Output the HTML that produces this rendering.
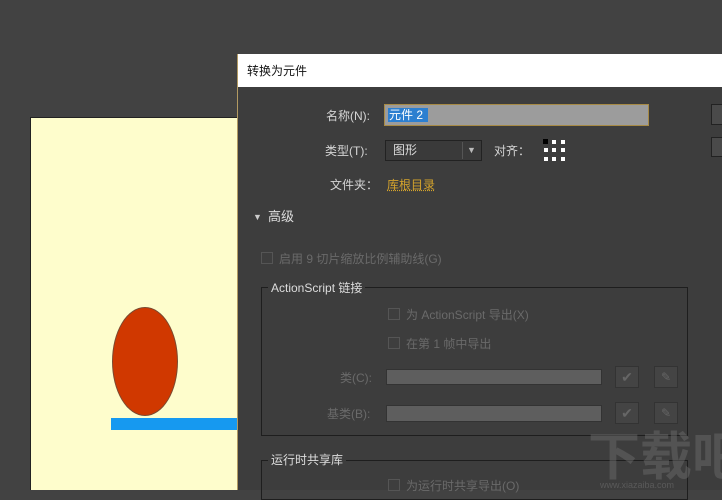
<!DOCTYPE html>
<html><head><meta charset="utf-8"><style>
*{margin:0;padding:0;box-sizing:border-box}
body{width:722px;height:490px;overflow:hidden;background:#424242;position:relative;font-family:"Liberation Sans","Noto Sans CJK SC",sans-serif;font-size:12px}
.a{position:absolute}
.t{position:absolute;white-space:nowrap;line-height:14px}
.cb{position:absolute;width:12px;height:12px;border:1px solid #555;background:#3e3e3e}
.dim{color:#6a6a6a}
.btn{position:absolute;width:24px;height:22px;border:1px solid #333;background:#444}
</style></head><body>
<div class="a" style="left:30px;top:117px;width:207px;height:373px;background:#fefdcc;border-left:1px solid #222;border-top:1px solid #222"></div>
<div class="a" style="left:112px;top:307px;width:66px;height:109px;border-radius:50%;background:#d03800;border:1px solid #7a4a30"></div>
<div class="a" style="left:111px;top:418px;width:126px;height:12px;background:#1699f0"></div>
<div class="a" style="left:237px;top:54px;width:485px;height:436px;background:#3d3d3d;border-left:1px solid #b29a62"></div>
<div class="a" style="left:238px;top:54px;width:484px;height:33px;background:#fff"></div>
<div class="t" style="left:247px;top:64px;color:#111;font-size:12px">转换为元件</div>
<div class="t" style="left:326px;top:109px;color:#d5d5d5">名称(N):</div>
<div class="a" style="left:384px;top:104px;width:265px;height:22px;background:#9c9c9c;border:1px solid #a78a45"></div>
<div class="a" style="left:388px;top:108px;width:40px;height:14px;background:#2c7fd0"></div>
<div class="t" style="left:389px;top:108px;color:#fff">元件 2</div>
<div class="a" style="left:711px;top:104px;width:12px;height:21px;border:1px solid #222;background:#4a4a4a"></div>
<div class="a" style="left:711px;top:137px;width:12px;height:20px;border:1px solid #222;background:#4a4a4a"></div>
<div class="t" style="left:325px;top:144px;color:#d5d5d5">类型(T):</div>
<div class="a" style="left:385px;top:140px;width:97px;height:21px;background:#3a3a3a;border:1px solid #222"></div>
<div class="a" style="left:462px;top:142px;width:1px;height:17px;background:#555"></div>
<div class="t" style="left:393px;top:143px;color:#ddd">图形</div>
<div class="t" style="left:467px;top:143px;color:#bbb;font-size:9px">▼</div>
<div class="t" style="left:494px;top:144px;color:#d5d5d5">对齐：</div>
<svg class="a" style="left:543px;top:139px" width="24" height="23"><g fill="#fff"><rect x="0" y="0" width="5" height="5" fill="#000"/><rect x="9" y="1" width="4" height="4"/><rect x="18" y="1" width="4" height="4"/><rect x="1" y="9" width="4" height="4"/><rect x="9" y="9" width="4" height="4"/><rect x="18" y="9" width="4" height="4"/><rect x="1" y="18" width="4" height="4"/><rect x="9" y="18" width="4" height="4"/><rect x="18" y="18" width="4" height="4"/></g></svg>
<div class="t" style="left:330px;top:178px;color:#d5d5d5">文件夹：</div>
<div class="t" style="left:387px;top:178px;color:#d4a32c;text-decoration:underline dotted">库根目录</div>
<div class="t" style="left:253px;top:210px;color:#ccc;font-size:9px">▼</div>
<div class="t" style="left:268px;top:210px;color:#ddd;font-size:13px">高级</div>
<div class="cb" style="left:261px;top:252px"></div>
<div class="t dim" style="left:279px;top:252px">启用 9 切片缩放比例辅助线(G)</div>
<div class="a" style="left:261px;top:287px;width:427px;height:149px;border:1px solid #1e1e1e"></div>
<div class="t" style="left:268px;top:281px;color:#ddd;background:#3d3d3d;padding:0 3px">ActionScript 链接</div>
<div class="cb" style="left:388px;top:308px"></div>
<div class="t dim" style="left:406px;top:308px">为 ActionScript 导出(X)</div>
<div class="cb" style="left:388px;top:337px"></div>
<div class="t dim" style="left:406px;top:337px">在第 1 帧中导出</div>
<div class="t dim" style="left:340px;top:371px">类(C):</div>
<div class="a" style="left:386px;top:369px;width:216px;height:16px;background:#5e5e5e;border:1px solid #333"></div>
<div class="btn" style="left:615px;top:366px;color:#666;text-align:center;line-height:20px;font-size:14px">✔</div>
<div class="btn" style="left:654px;top:366px;color:#666;text-align:center;line-height:20px;font-size:12px">✎</div>
<div class="t dim" style="left:327px;top:407px">基类(B):</div>
<div class="a" style="left:386px;top:405px;width:216px;height:17px;background:#5e5e5e;border:1px solid #333"></div>
<div class="btn" style="left:615px;top:402px;color:#666;text-align:center;line-height:20px;font-size:14px">✔</div>
<div class="btn" style="left:654px;top:402px;color:#666;text-align:center;line-height:20px;font-size:12px">✎</div>
<div class="a" style="left:261px;top:460px;width:427px;height:40px;border:1px solid #1e1e1e"></div>
<div class="t" style="left:268px;top:453px;color:#ddd;background:#3d3d3d;padding:0 3px">运行时共享库</div>
<div class="cb" style="left:388px;top:479px"></div>
<div class="t dim" style="left:406px;top:479px">为运行时共享导出(O)</div>
<div class="t" style="left:588px;top:430px;color:rgba(110,110,110,.45);font-size:52px;line-height:56px;font-weight:bold">下载吧</div>
<div class="t" style="left:600px;top:478px;color:#5a5a5a;font-size:9px">www.xiazaiba.com</div>
</body></html>
